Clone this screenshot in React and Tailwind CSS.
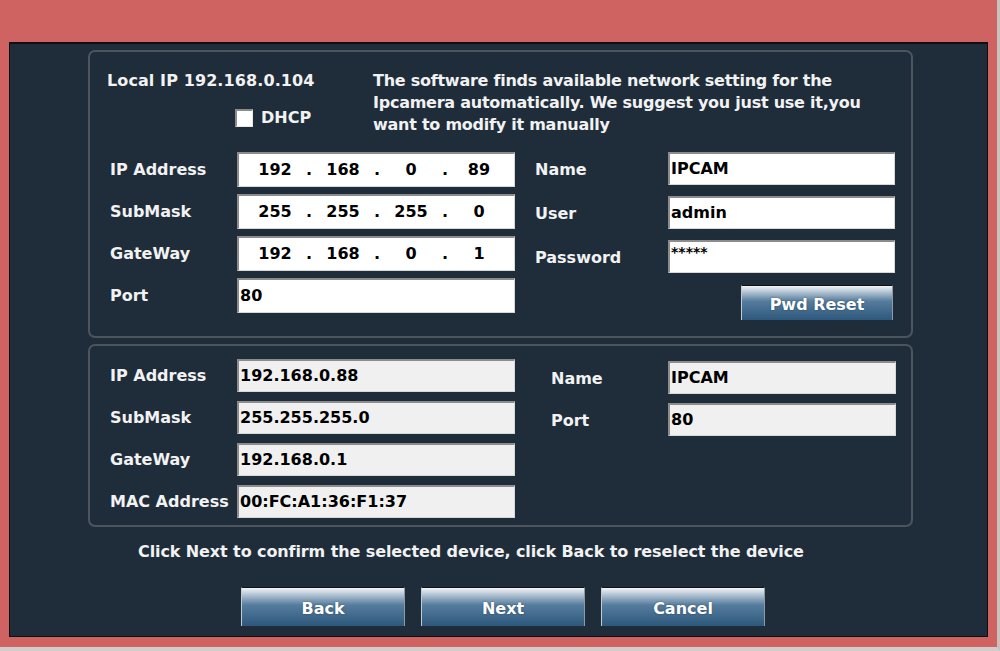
import React from "react";

const font = { fontFamily: '"DejaVu Sans", Verdana, sans-serif' };

// sunken edit box, classic win32 look
const Field = ({ value, grey, className = "" }) => (
  <div
    className={`flex items-center border-t-2 border-l-2 border-b border-r border-t-[#8c8c8c] border-l-[#8c8c8c] border-b-[#d8d8d8] border-r-[#d8d8d8] pl-[1px] text-[16px] font-bold text-black leading-none ${
      grey ? "bg-[#f0f0f0]" : "bg-white"
    } ${className}`}
  >
    {value}
  </div>
);

const IpField = ({ parts }) => (
  <div className="flex items-center h-[35px] w-[278px] bg-white border-t-2 border-l-2 border-b border-r border-t-[#8c8c8c] border-l-[#8c8c8c] border-b-[#d8d8d8] border-r-[#d8d8d8] pl-[8px] text-[16px] font-bold text-black leading-none">
    {parts.map((p, i) => (
      <React.Fragment key={i}>
        <span className="w-[56px] text-center">{p}</span>
        {i < parts.length - 1 && <span className="w-[12px] text-center">.</span>}
      </React.Fragment>
    ))}
  </div>
);

const Label = ({ children, className = "" }) => (
  <div className={`text-[16px] font-bold text-[#f2f2f2] leading-none ${className}`}>{children}</div>
);

const GlossButton = ({ children, className = "" }) => (
  <button
    className={`flex items-center justify-center pt-[3px] bg-linear-to-b from-[#f2f5f7] from-0% via-[#557c9d] via-45% to-[#2d587c] to-100% border-l border-r border-t border-l-[#c4ccd3] border-r-[#8e9aa4] border-t-[#111] text-[16px] font-bold text-white leading-none [text-shadow:0_0_2px_rgba(0,0,0,0.4)] ${className}`}
  >
    {children}
  </button>
);

export default function App() {
  return (
    <div
      style={font}
      className="w-[1000px] h-[651px] bg-[#cf6362] pt-[42px] pl-[9px] pr-[9px] pb-[10px] border-r-[3px] border-b-[4px] border-r-[#c9c1bf] border-b-[#d2cccb] box-border"
    >
      <div className="h-[595px] bg-[#1f2d3b] border-t-2 border-l border-r border-b border-[#0d0f12] flex flex-col">
        {/* device network settings */}
        <div className="ml-[78px] mt-[6px] w-[825px] h-[288px] border-2 border-[#4c545d] rounded-[7px] flex flex-col">
          <div className="flex mt-[18px] ml-[17px]">
            <div className="w-[266px] flex flex-col">
              <div className="h-[22px] flex items-center text-[16px] font-bold text-[#f2f2f2] tracking-[0.1px]">
                Local IP 192.168.0.104
              </div>
              <div className="mt-[15px] h-[22px] pl-[128px] flex items-center gap-[8px]">
                <span className="w-[18px] h-[18px] bg-white border-t-2 border-l-2 border-b border-r border-t-[#8c8c8c] border-l-[#8c8c8c] border-b-[#e8e8e8] border-r-[#e8e8e8]" />
                <span className="text-[16px] font-bold text-[#f2f2f2]">DHCP</span>
              </div>
            </div>
            <p className="text-[16px] font-bold text-[#f2f2f2] leading-[22px] tracking-[-0.25px]">
              The software finds available network setting for the
              <br />
              Ipcamera automatically. We suggest you just use it,you
              <br />
              want to modify it manually
            </p>
          </div>

          <div className="flex mt-[16px] ml-[20px]">
            <div className="flex flex-col gap-[7px]">
              {[
                ["IP Address", ["192", "168", "0", "89"]],
                ["SubMask", ["255", "255", "255", "0"]],
                ["GateWay", ["192", "168", "0", "1"]],
              ].map(([label, parts]) => (
                <div key={label} className="flex items-center">
                  <Label className="w-[127px]">{label}</Label>
                  <IpField parts={parts} />
                </div>
              ))}
              <div className="flex items-center">
                <Label className="w-[127px]">Port</Label>
                <Field value="80" className="w-[278px] h-[35px]" />
              </div>
            </div>

            <div className="flex flex-col ml-[20px]">
              <div className="flex flex-col gap-[11px]">
                {[
                  ["Name", "IPCAM"],
                  ["User", "admin"],
                  ["Password", "*****"],
                ].map(([label, value]) => (
                  <div key={label} className="flex items-center">
                    <Label className="w-[133px] pt-[3px]">{label}</Label>
                    <Field
                      value={label === "Password" ? <span className="self-start pt-[3px] text-[14px]">{value}</span> : value}
                      className="w-[227px] h-[33px]"
                    />
                  </div>
                ))}
              </div>
              <div className="flex justify-end pr-[2px] mt-[12px]">
                <GlossButton className="w-[152px] h-[35px]">Pwd Reset</GlossButton>
              </div>
            </div>
          </div>
        </div>

        {/* current device info */}
        <div className="ml-[78px] mt-[6px] w-[825px] h-[183px] border-2 border-[#4c545d] rounded-[7px] flex pt-[13px] pl-[20px]">
          <div className="flex flex-col gap-[9px]">
            {[
              ["IP Address", "192.168.0.88"],
              ["SubMask", "255.255.255.0"],
              ["GateWay", "192.168.0.1"],
              ["MAC Address", "00:FC:A1:36:F1:37"],
            ].map(([label, value]) => (
              <div key={label} className="flex items-center">
                <Label className="w-[127px]">{label}</Label>
                <Field grey value={value} className="w-[278px] h-[33px]" />
              </div>
            ))}
          </div>
          <div className="flex flex-col gap-[9px] ml-[36px] pt-[2px]">
            {[
              ["Name", "IPCAM"],
              ["Port", "80"],
            ].map(([label, value]) => (
              <div key={label} className="flex items-center">
                <Label className="w-[117px] pt-[3px]">{label}</Label>
                <Field grey value={value} className="w-[228px] h-[33px]" />
              </div>
            ))}
          </div>
        </div>

        <div className="mt-[14px] pl-[128px] h-[22px] flex items-center text-[16px] font-bold text-[#f2f2f2] tracking-[-0.1px]">
          Click Next to confirm the selected device, click Back to reselect the device
        </div>

        <div className="mt-[24px] pl-[231px] flex gap-[16px]">
          <GlossButton className="w-[164px] h-[39px]">Back</GlossButton>
          <GlossButton className="w-[164px] h-[39px]">Next</GlossButton>
          <GlossButton className="w-[164px] h-[39px]">Cancel</GlossButton>
        </div>
      </div>
    </div>
  );
}
